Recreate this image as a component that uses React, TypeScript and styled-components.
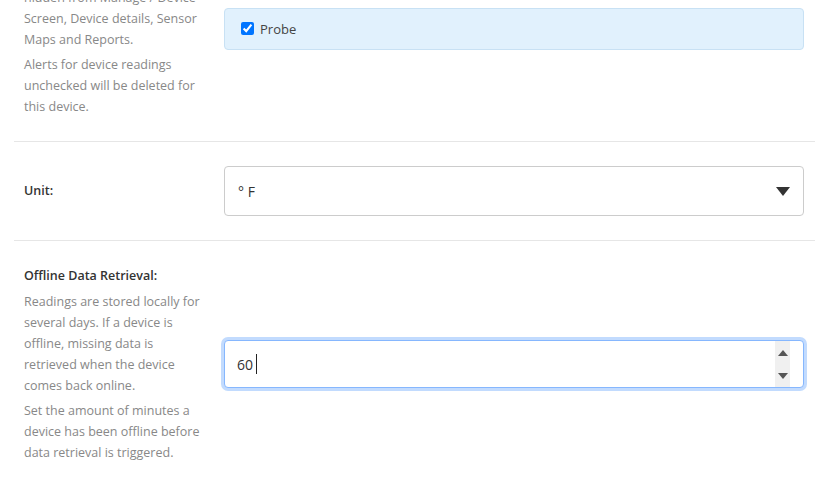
import React from "react";
import styled, { createGlobalStyle } from "styled-components";

const Global = createGlobalStyle`
  html, body { margin: 0; padding: 0; background: #fff; overflow: hidden; }
  body { font-family: "Open Sans", "Liberation Sans", sans-serif; }
`;

const Page = styled.div`
  margin: -84px 15px 0 14px;
`;

const Row = styled.div<{ $last?: boolean }>`
  display: flex;
  align-items: center;
  gap: 18px;
  padding: 24px 11px 24px 10px;
  border-bottom: ${(p) => (p.$last ? "none" : "1px solid #e6e6e6")};
`;

const LabelCol = styled.div`
  width: 182px;
  flex-shrink: 0;
`;

const FieldCol = styled.div`
  flex: 1;
  min-width: 0;
`;

const Label = styled.div`
  font-size: 12.5px;
  font-weight: 600;
  color: #333;
  line-height: 22px;
`;

const Desc = styled.p`
  margin: 4px 0 0;
  font-size: 12.5px;
  line-height: 21px;
  color: #888;
`;

const CheckBox = styled.label`
  display: flex;
  align-items: center;
  gap: 6px;
  height: 40px;
  padding: 0 16px;
  background: #e1f1fd;
  border: 1px solid #c8e1f4;
  border-radius: 4px;
  font-size: 13px;
  font-weight: 500;
  color: #444;
  input { margin: 0; width: 13px; height: 13px; }
`;

const Relative = styled.div`
  position: relative;
`;

const Select = styled.select`
  appearance: none;
  width: 100%;
  height: 50px;
  padding: 0 13px;
  border: 1px solid #ccc;
  border-radius: 4px;
  background: #fff;
  font-family: inherit;
  font-size: 14px;
  color: #333;
  outline: none;
`;

const Caret = styled.svg`
  position: absolute;
  right: 14px;
  top: 21px;
  pointer-events: none;
`;

const NumberInput = styled.input`
  width: 100%;
  box-sizing: border-box;
  height: 48px;
  padding: 0 12px;
  border: 1px solid #86b7fe;
  border-radius: 4px;
  box-shadow: 0 0 0 3px #c2dbfe;
  font-family: inherit;
  font-size: 14px;
  color: #333;
  outline: none;
  appearance: textfield;
  caret-color: #222;
  &::-webkit-inner-spin-button,
  &::-webkit-outer-spin-button {
    -webkit-appearance: none;
    margin: 0;
  }
`;

const Spinner = styled.div`
  position: absolute;
  top: 1px;
  bottom: 1px;
  right: 14px;
  width: 15px;
  background: #f0f0f0;
  display: flex;
  flex-direction: column;
  justify-content: space-between;
  align-items: center;
  padding: 9px 0 8px;
  box-sizing: border-box;
  pointer-events: none;
`;

const Caretline = styled.span`
  position: absolute;
  left: 32px;
  top: 14px;
  width: 1px;
  height: 20px;
  background: #222;
  pointer-events: none;
`;

export default function App() {
  return (
    <>
      <Global />
      <Page>
        <Row>
          <LabelCol>
            <Label>Sensors:</Label>
            <Desc>
              Readings unchecked will be hidden from Manage / Device Screen, Device details, Sensor Maps and Reports.
            </Desc>
            <Desc>Alerts for device readings unchecked will be deleted for this device.</Desc>
          </LabelCol>
          <FieldCol>
            <CheckBox>
              <input type="checkbox" defaultChecked />
              Probe
            </CheckBox>
          </FieldCol>
        </Row>
        <Row>
          <LabelCol>
            <Label>Unit:</Label>
          </LabelCol>
          <FieldCol>
            <Relative>
              <Select defaultValue="F">
                <option value="F">° F</option>
                <option value="C">° C</option>
              </Select>
              <Caret width="14" height="9" viewBox="0 0 14 9">
                <path d="M0 0 H14 L7 9 Z" fill="#333" />
              </Caret>
            </Relative>
          </FieldCol>
        </Row>
        <Row $last>
          <LabelCol>
            <Label>Offline Data Retrieval:</Label>
            <Desc>
              Readings are stored locally for several days. If a device is offline, missing data is retrieved when the device comes back online.
            </Desc>
            <Desc>Set the amount of minutes a device has been offline before data retrieval is triggered.</Desc>
          </LabelCol>
          <FieldCol>
            <Relative>
              <NumberInput type="number" defaultValue={60} />
              <Caretline />
              <Spinner>
                <svg width="10" height="6" viewBox="0 0 10 6">
                  <path d="M0 6 L5 0 L10 6 Z" fill="#555" />
                </svg>
                <svg width="10" height="6" viewBox="0 0 10 6">
                  <path d="M0 0 H10 L5 6 Z" fill="#555" />
                </svg>
              </Spinner>
            </Relative>
          </FieldCol>
        </Row>
      </Page>
    </>
  );
}
